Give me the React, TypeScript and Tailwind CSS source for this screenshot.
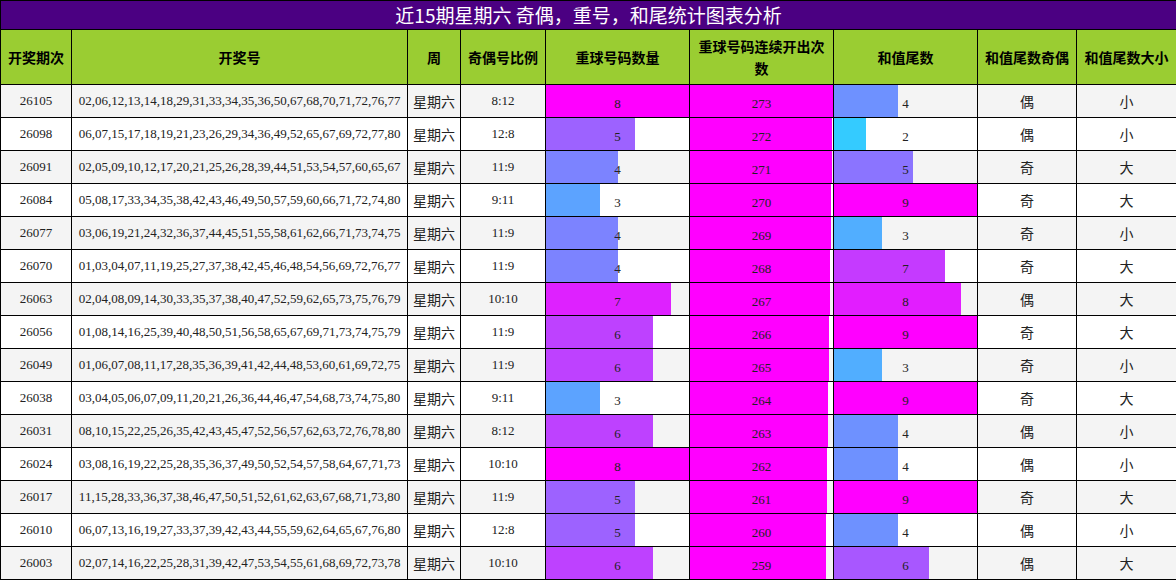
const ROWS: [string, string, string, number, number, number][] = [
  ["26105", "02,06,12,13,14,18,29,31,33,34,35,36,50,67,68,70,71,72,76,77", "8:12", 8, 273, 4],
  ["26098", "06,07,15,17,18,19,21,23,26,29,34,36,49,52,65,67,69,72,77,80", "12:8", 5, 272, 2],
  ["26091", "02,05,09,10,12,17,20,21,25,26,28,39,44,51,53,54,57,60,65,67", "11:9", 4, 271, 5],
  ["26084", "05,08,17,33,34,35,38,42,43,46,49,50,57,59,60,66,71,72,74,80", "9:11", 3, 270, 9],
  ["26077", "03,06,19,21,24,32,36,37,44,45,51,55,58,61,62,66,71,73,74,75", "11:9", 4, 269, 3],
  ["26070", "01,03,04,07,11,19,25,27,37,38,42,45,46,48,54,56,69,72,76,77", "11:9", 4, 268, 7],
  ["26063", "02,04,08,09,14,30,33,35,37,38,40,47,52,59,62,65,73,75,76,79", "10:10", 7, 267, 8],
  ["26056", "01,08,14,16,25,39,40,48,50,51,56,58,65,67,69,71,73,74,75,79", "11:9", 6, 266, 9],
  ["26049", "01,06,07,08,11,17,28,35,36,39,41,42,44,48,53,60,61,69,72,75", "11:9", 6, 265, 3],
  ["26038", "03,04,05,06,07,09,11,20,21,26,36,44,46,47,54,68,73,74,75,80", "9:11", 3, 264, 9],
  ["26031", "08,10,15,22,25,26,35,42,43,45,47,52,56,57,62,63,72,76,78,80", "8:12", 6, 263, 4],
  ["26024", "03,08,16,19,22,25,28,35,36,37,49,50,52,54,57,58,64,67,71,73", "10:10", 8, 262, 4],
  ["26017", "11,15,28,33,36,37,38,46,47,50,51,52,61,62,63,67,68,71,73,80", "11:9", 5, 261, 9],
  ["26010", "06,07,13,16,19,27,33,37,39,42,43,44,55,59,62,64,65,67,76,80", "12:8", 5, 260, 4],
  ["26003", "02,07,14,16,22,25,28,31,39,42,47,53,54,55,61,68,69,72,73,78", "10:10", 6, 259, 6],
];

function barColor(r: number) {
  const t = Math.max(0, Math.min(1, (r - 0.22) / 0.78));
  const R = Math.round(0x33 + t * (0xff - 0x33));
  const G = Math.round(0xcc * (1 - t));
  return `rgb(${R},${G},255)`;
}

const SERIF = { fontFamily: "'Liberation Serif', 'Noto Sans CJK SC', serif" };
const CJK = { fontFamily: "'Noto Sans CJK SC', 'Liberation Sans', sans-serif" };

function Bar({ value, max, solid }: { value: number; max: number; solid?: boolean }) {
  const r = value / max;
  return (
    <td className="relative border border-black p-0">
      <div
        className="absolute inset-y-0 left-0"
        style={{ width: `${r * 100}%`, background: solid ? "#ff00ff" : barColor(r) }}
      />
      <span className="relative text-[13px] text-[#222]" style={SERIF}>{value}</span>
    </td>
  );
}

export default function App() {
  return (
    <div className="w-[1176px] h-[580px] overflow-hidden bg-white" style={CJK}>
      <table className="w-[1176px] table-fixed border-collapse text-center">
        <colgroup>
          <col className="w-[71px]" />
          <col className="w-[336px]" />
          <col className="w-[53px]" />
          <col className="w-[85px]" />
          <col className="w-[144px]" />
          <col className="w-[144px]" />
          <col className="w-[144px]" />
          <col className="w-[99px]" />
          <col className="w-[100px]" />
        </colgroup>
        <thead>
          <tr className="h-[29px]">
            <th colSpan={9} className="border border-black bg-[#4b0082] p-0 text-[19px] leading-[26px] font-normal text-white">
              近15期星期六 奇偶，重号，和尾统计图表分析
            </th>
          </tr>
          <tr className="h-[55px] bg-[#9acd32] text-[14px] font-bold text-black">
            {["开奖期次", "开奖号", "周", "奇偶号比例", "重球号码数量", "重球号码连续开出次数", "和值尾数", "和值尾数奇偶", "和值尾数大小"].map((h) => (
              <th key={h} className="border border-black px-1 leading-[22px]">{h}</th>
            ))}
          </tr>
        </thead>
        <tbody>
          {ROWS.map((row, i) => (
            <tr key={row[0]} className={`h-[33px] ${i % 2 === 0 ? "bg-[#f4f4f4]" : "bg-white"}`}>
              <td className="border border-black text-[13px] text-[#222]" style={SERIF}>{row[0]}</td>
              <td className="border border-black p-0 text-[13px] text-[#222]" style={SERIF}>{row[1]}</td>
              <td className="border border-black p-0 text-[14px] text-[#222]">星期六</td>
              <td className="border border-black text-[13px] text-[#222]" style={SERIF}>{row[2]}</td>
              <Bar value={row[3]} max={8} />
              <Bar value={row[4]} max={273} solid />
              <Bar value={row[5]} max={9} />
              <td className="border border-black text-[14px] text-[#222]">{row[5] % 2 === 0 ? "偶" : "奇"}</td>
              <td className="border border-black text-[14px] text-[#222]">{row[5] >= 5 ? "大" : "小"}</td>
            </tr>
          ))}
        </tbody>
      </table>
    </div>
  );
}
